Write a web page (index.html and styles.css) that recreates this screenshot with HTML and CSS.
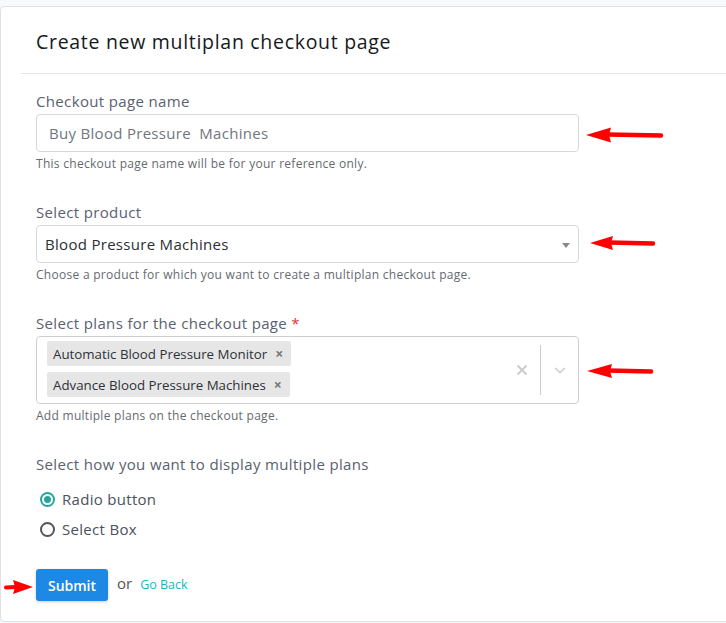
FILE: index.html
```html
<!DOCTYPE html>
<html lang="en">
<head>
<meta charset="utf-8">
<title>Create new multiplan checkout page</title>
<link rel="stylesheet" href="styles.css">
</head>
<body>
<div class="page">
  <div class="card">
    <div class="card-header">
      <h1 class="title">Create new multiplan checkout page</h1>
    </div>
    <form class="card-body">
      <div class="field">
        <label class="label">Checkout page name</label>
        <div class="input placeholder">Buy Blood Pressure&nbsp; Machines</div>
        <p class="help">This checkout page name will be for your reference only.</p>
      </div>
      <div class="field">
        <label class="label">Select product</label>
        <div class="input select">
          <span class="select-value">Blood Pressure Machines</span>
          <span class="caret"></span>
        </div>
        <p class="help">Choose a product for which you want to create a multiplan checkout page.</p>
      </div>
      <div class="field">
        <label class="label">Select plans for the checkout page <span class="req">*</span></label>
        <div class="multi">
          <div class="tags">
            <span class="tag">Automatic Blood Pressure Monitor <span class="tag-x">×</span></span>
            <span class="tag">Advance Blood Pressure Machines <span class="tag-x">×</span></span>
          </div>
          <div class="indicators">
            <svg class="clear" width="12" height="12" viewBox="0 0 12 12"><path d="M1.5 1.5 L10.5 10.5 M10.5 1.5 L1.5 10.5" stroke="#cccccc" stroke-width="2" fill="none"/></svg>
            <span class="sep"></span>
            <svg class="chev" width="14" height="10" viewBox="0 0 14 10"><path d="M2 3 L7 7.5 L12 3" stroke="#cccccc" stroke-width="1.6" fill="none"/></svg>
          </div>
        </div>
        <p class="help">Add multiple plans on the checkout page.</p>
      </div>
      <div class="field field-last">
        <label class="label">Select how you want to display multiple plans</label>
        <div class="radios">
          <div class="radio"><span class="dot checked"></span>Radio button</div>
          <div class="radio"><span class="dot"></span>Select Box</div>
        </div>
      </div>
      <div class="actions">
        <button type="button" class="btn">Submit</button>
        <span class="or">or</span>
        <a class="back" href="#">Go Back</a>
      </div>
    </form>
  </div>
</div>
<svg class="arrows" width="726" height="623" viewBox="0 0 726 623">
  <g fill="#ff0000" stroke="#ff0000" stroke-linecap="round">
    <polygon points="586,135 611,127.5 609,135 611,142.5" stroke="none"/>
    <line x1="607" y1="134.5" x2="661" y2="135.5" stroke-width="4.5"/>
    <polygon points="590,243 613,236 611,243 613,250" stroke="none"/>
    <line x1="609" y1="242.5" x2="653" y2="243.5" stroke-width="4.5"/>
    <polygon points="587,371 612,364 610,371 612,378" stroke="none"/>
    <line x1="608" y1="370.5" x2="651" y2="371.5" stroke-width="4.5"/>
    <polygon points="33,587 13,580 15,587 13,594" stroke="none"/>
    <line x1="6" y1="587.5" x2="16" y2="587" stroke-width="4"/>
  </g>
</svg>
</body>
</html>
```
FILE: styles.css
```css
* { box-sizing: border-box; }
html, body { margin: 0; padding: 0; }
body {
  background: #f8f9fa;
  font-family: "Open Sans", "Noto Sans", sans-serif;
  color: #333;
  width: 726px;
  height: 623px;
  overflow: hidden;
  position: relative;
}
.page { padding-top: 6px; padding-left: 0; }
.card {
  background: #fff;
  border: 1px solid #dde2e6;
  border-radius: 4px;
  width: 760px;
  height: 616px;
}
.card-header {
  margin-left: 20px;
  padding: 21px 15px 0 15px;
  height: 67px;
  border-bottom: 1px solid #e3e5e8;
}
.title {
  margin: 0;
  font-size: 19.5px;
  line-height: 28px;
  font-weight: 500;
  letter-spacing: 0.7px;
  color: #15191c;
}
.card-body {
  padding: 17px 0 0 35px;
  width: 578px;
}
.field { margin-bottom: 30px; }
.field-last { margin-bottom: 25px; }
.label {
  display: block;
  font-size: 15px;
  line-height: 20px;
  letter-spacing: 0.35px;
  color: #596170;
  margin-bottom: 3px;
}
.req { color: #e0303e; }
.input {
  height: 38px;
  border: 1px solid #d6d9dc;
  border-radius: 4px;
  font-size: 15px;
  letter-spacing: 0.3px;
  display: flex;
  align-items: center;
  padding-left: 12px;
  width: 543px;
}
.placeholder { color: #70767e; }
.select { padding-left: 8px; padding-right: 8px; justify-content: space-between; color: #2b2f33; }
.caret {
  width: 0; height: 0;
  border-left: 4px solid transparent;
  border-right: 4px solid transparent;
  border-top: 5px solid #888;
  margin-top: 2px;
}
.help {
  margin: 4px 0 0;
  font-size: 12px;
  line-height: 16px;
  letter-spacing: 0.28px;
  color: #666a70;
}
.multi {
  width: 543px;
  height: 68px;
  border: 1px solid #cccfd2;
  border-radius: 4px;
  display: flex;
  justify-content: space-between;
}
.tags {
  display: flex;
  flex-direction: column;
  align-items: flex-start;
  gap: 6px;
  padding: 4px 0 0 10px;
}
.tag {
  background: #e6e6e6;
  border-radius: 2px;
  height: 25px;
  display: flex;
  align-items: center;
  padding: 0 8px 0 6px;
  font-size: 13.3px;
  color: #2e3236;
  white-space: nowrap;
}
.tag-x { color: #777; font-size: 14px; margin-left: 8px; font-weight: 700; }
.indicators {
  display: flex;
  align-items: center;
  padding: 8px 0;
}
.clear { margin-right: 12px; }
.sep { width: 1px; align-self: stretch; background: #cccccc; }
.chev { margin: 0 11px 0 12px; }
.radios { padding-top: 7px; padding-left: 4px; }
.radio {
  display: flex;
  align-items: center;
  height: 30px;
  font-size: 15px;
  letter-spacing: 0.3px;
  color: #4b525c;
}
.dot {
  width: 15px; height: 15px;
  border-radius: 50%;
  border: 2px solid #555;
  margin-right: 7px;
  position: relative;
}
.dot.checked { border-color: #26a69a; }
.dot.checked::after {
  content: "";
  position: absolute;
  left: 2px; top: 2px;
  width: 7px; height: 7px;
  border-radius: 50%;
  background: #26a69a;
}
.actions {
  display: flex;
  align-items: center;
}
.btn {
  background: #1e88e5;
  color: #fff;
  border: none;
  border-radius: 3px;
  height: 32px;
  width: 72px;
  font-family: inherit;
  font-size: 14px;
  font-weight: 600;
  box-shadow: 0 1px 3px rgba(0,0,0,0.2);
  padding: 0;
}
.or { margin-left: 9px; font-size: 15px; color: #555; margin-top: -4px; }
.back { margin-left: 8px; font-size: 12.5px; color: #17b3c8; text-decoration: none; margin-top: -2px; }
.arrows { position: absolute; left: 0; top: 0; pointer-events: none; }
```
